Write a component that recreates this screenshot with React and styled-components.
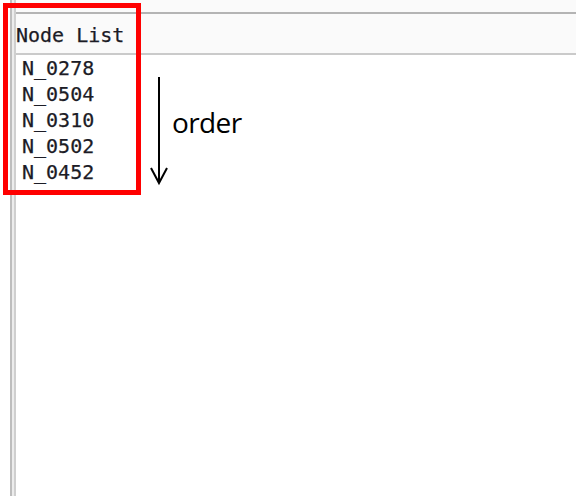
import React from "react";
import styled, { createGlobalStyle } from "styled-components";

const Global = createGlobalStyle`
  html, body { margin: 0; padding: 0; background: #ffffff; }
  body { width: 576px; height: 496px; overflow: hidden; }
`;

const Page = styled.div`
  position: relative;
  display: flex;
  width: 576px;
  height: 496px;
  background: #ffffff;
`;

const Gutter = styled.div`
  width: 10px;
  flex: none;
  background: #ffffff;
`;

const Splitter = styled.div`
  width: 6px;
  flex: none;
  background: linear-gradient(
    to right,
    #bdbdbd 0 2px,
    #ececec 2px 4px,
    #cfcfcf 4px 6px
  );
`;

const Panel = styled.div`
  flex: 1;
  display: flex;
  flex-direction: column;
  min-width: 0;
`;

const TopBand = styled.div`
  height: 12px;
  background: #fafafa;
`;

const Header = styled.div`
  height: 39px;
  box-sizing: content-box;
  border-top: 2px solid #b4b4b4;
  border-bottom: 2px solid #cacaca;
  background: #fafafa;
  display: flex;
  align-items: flex-start;
`;

const Title = styled.span`
  font-family: "DejaVu Sans Mono", "Liberation Mono", monospace;
  font-size: 20px;
  line-height: 23px;
  padding-top: 10px;
  color: #1c1c26;
  -webkit-text-stroke: 0.25px #1c1c26;
`;

const List = styled.ul`
  list-style: none;
  margin: 0;
  padding: 0 0 0 6px;
  flex: 1;
  background: #ffffff;
`;

const Item = styled.li`
  font-family: "DejaVu Sans Mono", "Liberation Mono", monospace;
  font-size: 20px;
  line-height: 26px;
  color: #1c1c26;
  -webkit-text-stroke: 0.25px #1c1c26;
`;

const Highlight = styled.div`
  position: absolute;
  left: 3px;
  top: 3px;
  width: 138px;
  height: 192px;
  box-sizing: border-box;
  border: 5px solid #ff0000;
  pointer-events: none;
`;

const ArrowSvg = styled.svg`
  position: absolute;
  left: 149px;
  top: 76px;
`;

const OrderLabel = styled.span`
  position: absolute;
  left: 172px;
  top: 108px;
  font-family: "Open Sans", "Noto Sans", sans-serif;
  font-size: 28px;
  line-height: 28px;
  letter-spacing: -0.6px;
  color: #000000;
`;

const nodes = ["N_0278", "N_0504", "N_0310", "N_0502", "N_0452"];

export default function App() {
  return (
    <>
      <Global />
      <Page>
        <Gutter />
        <Splitter />
        <Panel>
          <TopBand />
          <Header>
            <Title>Node List</Title>
          </Header>
          <List>
            {nodes.map((n) => (
              <Item key={n}>{n}</Item>
            ))}
          </List>
        </Panel>
        <Highlight />
        <ArrowSvg width="20" height="110" viewBox="0 0 20 110">
          <line x1="10" y1="1" x2="10" y2="106" stroke="#000" strokeWidth="2" />
          <polyline
            points="2,92 10,107 18,92"
            fill="none"
            stroke="#000"
            strokeWidth="2"
          />
        </ArrowSvg>
        <OrderLabel>order</OrderLabel>
      </Page>
    </>
  );
}
